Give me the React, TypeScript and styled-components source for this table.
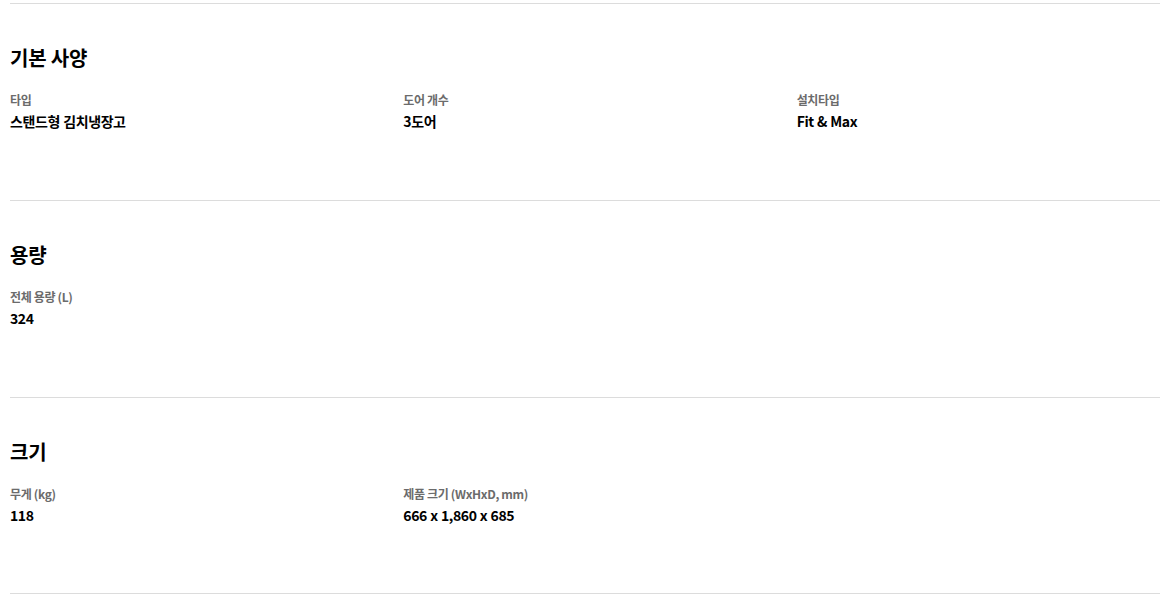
import React from "react";
import styled, { createGlobalStyle } from "styled-components";

const Global = createGlobalStyle`
  html, body { margin: 0; padding: 0; background: #fff; }
  body { font-family: "Noto Sans CJK KR", "Noto Sans", sans-serif; color: #000; }
`;

const Page = styled.div`
  padding: 3px 11px 0 10px;
`;

const Section = styled.section`
  border-top: 1px solid #dcdcdc;
  padding: 39px 0 69px;
  &:last-child {
    padding-bottom: 68px;
    border-bottom: 1px solid #dcdcdc;
  }
`;

const Heading = styled.h2`
  margin: 0;
  font-size: 20px;
  line-height: 30px;
  font-weight: 700;
  color: #000;
  letter-spacing: -0.2px;
`;

const Grid = styled.dl`
  margin: 18px 0 0;
  display: grid;
  grid-template-columns: repeat(3, 1fr);
  column-gap: 30px;
`;

const Item = styled.div``;

const Label = styled.dt`
  font-size: 12px;
  line-height: 18px;
  font-weight: 700;
  color: #6b6b6b;
  letter-spacing: -0.35px;
`;

const Value = styled.dd`
  margin: 2px 0 0;
  font-size: 14px;
  line-height: 20px;
  font-weight: 700;
  color: #000;
  letter-spacing: -0.4px;
  word-spacing: 0.5px;
`;

const sections = [
  {
    title: "기본 사양",
    items: [
      ["타입", "스탠드형 김치냉장고"],
      ["도어 개수", "3도어"],
      ["설치타입", "Fit & Max"],
    ],
  },
  { title: "용량", items: [["전체 용량 (L)", "324"]] },
  {
    title: "크기",
    items: [
      ["무게 (kg)", "118"],
      ["제품 크기 (WxHxD, mm)", "666 x 1,860 x 685"],
    ],
  },
];

export default function App() {
  return (
    <>
      <Global />
      <Page>
        {sections.map((s) => (
          <Section key={s.title}>
            <Heading>{s.title}</Heading>
            <Grid>
              {s.items.map(([l, v]) => (
                <Item key={l}>
                  <Label>{l}</Label>
                  <Value>{v}</Value>
                </Item>
              ))}
            </Grid>
          </Section>
        ))}
      </Page>
    </>
  );
}
